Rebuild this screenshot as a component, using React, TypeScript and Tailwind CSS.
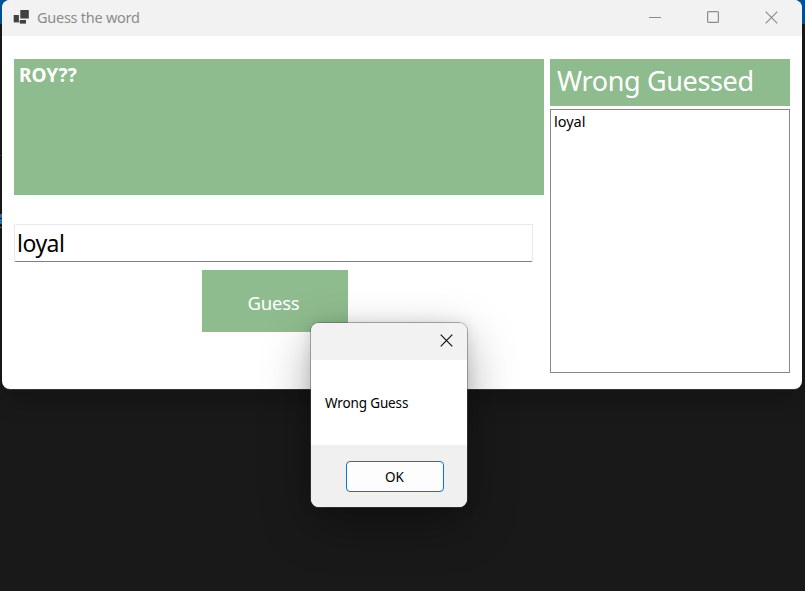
import React from "react";

function AppIcon() {
  return (
    <svg width="16" height="16" viewBox="0 0 16 16" className="-mt-[3px] shrink-0" fill="#414141">
      <rect x="7.3" y="1" width="8.5" height="8.5" />
      <rect x="0.7" y="6" width="5.2" height="7.4" />
      <rect x="6.7" y="11" width="6.3" height="3.6" />
    </svg>
  );
}

function CloseIcon({ color }: { color: string }) {
  return (
    <svg width="13" height="13" viewBox="0 0 13 13" stroke={color} strokeWidth="1.2" fill="none">
      <path d="M.7.7l11.6 11.6M12.3.7L.7 12.3" />
    </svg>
  );
}

function TitleBar() {
  return (
    <header className="flex h-9 shrink-0 items-center bg-[#f2f2f2] pl-[11px] text-[#8c8c8c]">
      <AppIcon />
      <span className="ml-2 whitespace-nowrap text-[14.5px] tracking-[-0.26px]">Guess the word</span>
      <div className="ml-auto flex items-center pb-0.5 pr-6">
        <svg width="12" height="13" viewBox="0 0 12 13" stroke="#8c8c8c">
          <path d="M0 6.5h12" />
        </svg>
        <svg width="12" height="12" viewBox="0 0 12 12" stroke="#8c8c8c" fill="none" strokeWidth="1.2" className="ml-[46px]">
          <rect x=".6" y=".6" width="10.8" height="10.8" rx="1" />
        </svg>
        <span className="ml-[46px]"><CloseIcon color="#8c8c8c" /></span>
      </div>
    </header>
  );
}

function MessageBox() {
  return (
    <div role="dialog" className="absolute left-[311px] top-[323px] flex h-[184px] w-[156px] flex-col overflow-hidden rounded-lg bg-white shadow-[0_0_0_1px_rgba(80,80,80,0.45),0_16px_48px_rgba(0,0,0,0.34),0_1px_14px_rgba(0,0,0,0.12)]">
      <div className="flex h-[37px] shrink-0 items-center justify-end bg-[#f2f2f2] pb-0.5 pr-[14px]">
        <CloseIcon color="#111111" />
      </div>
      <p className="flex h-[85px] shrink-0 items-center whitespace-nowrap pl-[14px] pt-0.5 text-[13.5px] tracking-[-0.14px] text-black">Wrong Guess</p>
      <div className="flex flex-1 items-center justify-end bg-[#f0f0f0] pr-[23px]">
        <button className="h-[31px] w-[98px] rounded border border-[#0078d4] bg-[#fdfdfd] pr-px pt-0.5 text-[13.5px] text-black">OK</button>
      </div>
    </div>
  );
}

export default function App() {
  return (
    <div className="relative h-[591px] w-[805px] overflow-hidden bg-[#19191a] font-['Noto_Sans','Open_Sans',sans-serif]">
      <div className="h-6 bg-[#005499]" />
      <div className="absolute left-0 top-[155px] h-px w-0.5 bg-[#3b3b3b]" />
      <main className="absolute left-0.5 top-0 flex h-[389px] w-[800px] flex-col overflow-hidden rounded-lg bg-white shadow-[0_1px_0_0_#343638,0_12px_24px_rgba(0,0,0,0.2)]">
        <TitleBar />
        <div className="flex gap-1.5 pl-3 pt-[23px]">
          <section className="w-[530px]">
            <div className="h-[136px] bg-[#8fbc8f] pl-[5px] pt-[3px] text-[19px] font-bold leading-[27px] text-white">ROY??</div>
            <input
              defaultValue="loyal"
              className="mt-[29px] block h-[38px] w-[519px] rounded-[2px] border border-[#e8e8e8] border-b-[#808080] bg-white px-0.5 text-[23px] tracking-[-0.5px] text-black outline-none"
            />
            <button className="ml-[188px] mt-2 block h-[62px] w-[146px] bg-[#8fbc8f] pr-[3px] pt-1 text-[18.5px] tracking-[-0.2px] text-white">Guess</button>
          </section>
          <aside className="w-[240px]">
            <h2 className="h-[47px] whitespace-nowrap bg-[#8fbc8f] pl-[7px] text-[27px] leading-[43px] tracking-[-0.36px] text-white">Wrong Guessed</h2>
            <ul className="mt-[3px] h-[264px] border border-[#828790] pl-[3px] pt-px text-[14.5px] leading-5 text-black">
              <li>loyal</li>
            </ul>
          </aside>
        </div>
      </main>
      <div className="absolute left-0 top-[214px] flex w-0.5 flex-col gap-px">
        <i className="h-1 bg-[#286ca9]" />
        <i className="h-[5px] bg-[#286ca9]" />
        <i className="mt-0.5 h-px bg-[#286ca9]" />
      </div>
      <MessageBox />
    </div>
  );
}
